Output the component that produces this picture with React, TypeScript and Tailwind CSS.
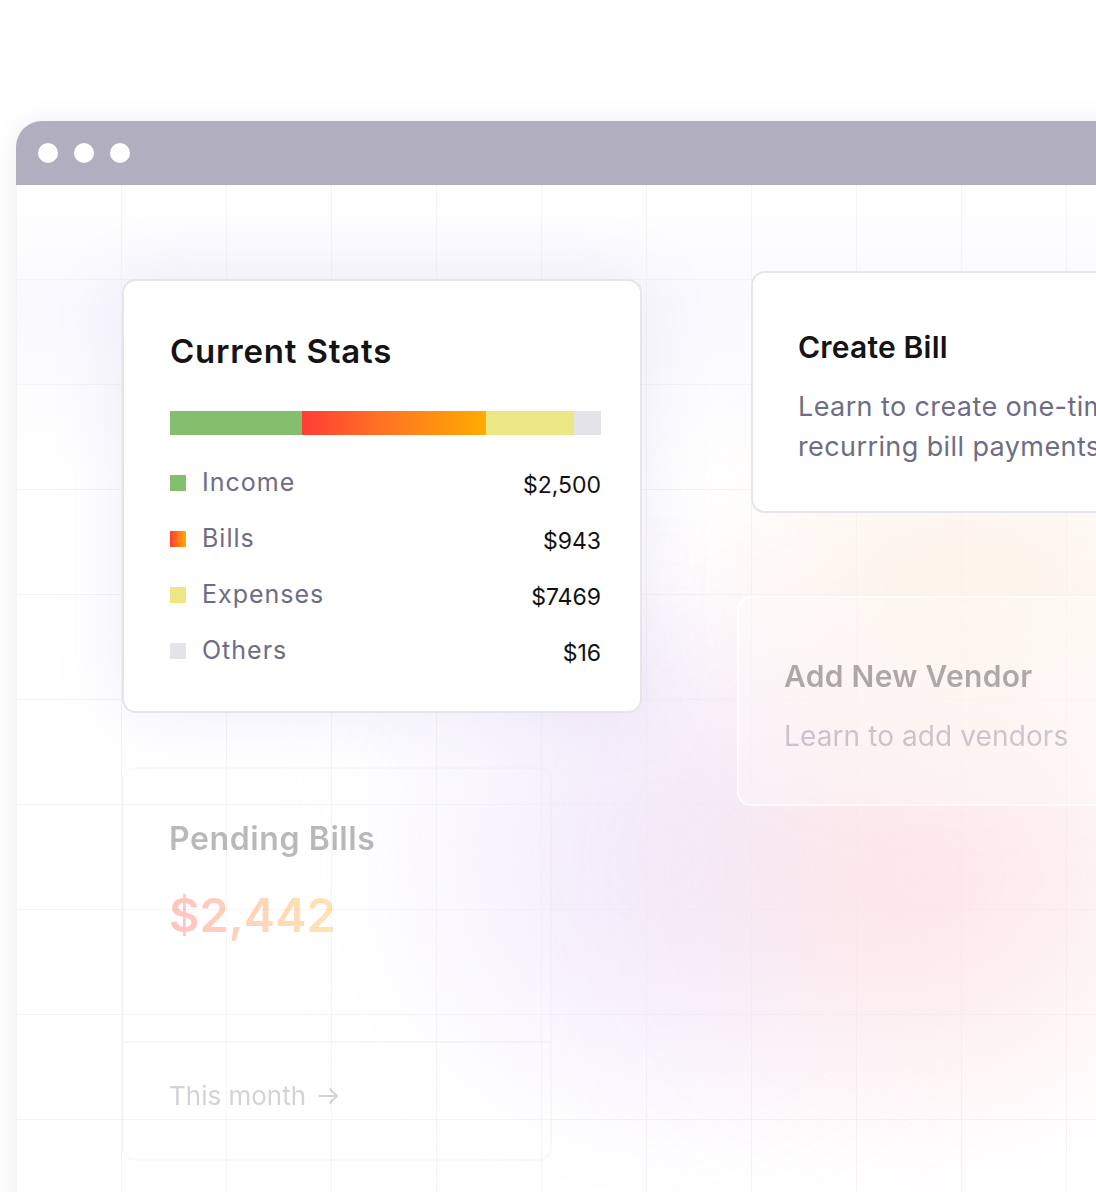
import React from 'react'

type Stat = {
    label: string
    value: string
    swatch: string
}

const stats: Stat[] = [
    { label: 'Income', value: '$2,500', swatch: 'bg-[#84bf6e]' },
    { label: 'Bills', value: '$943', swatch: 'bg-[linear-gradient(to_right,#ff3d35,#ffab00)]' },
    { label: 'Expenses', value: '$7469', swatch: 'bg-[#ebe784]' },
    { label: 'Others', value: '$16', swatch: 'bg-[#e4e4e8]' },
]

function CurrentStats() {
    return (
        <div className="w-[520px] h-[434px] bg-white border-2 border-[#e6e5ea] rounded-[14px] shadow-[0_0_70px_rgba(150,130,210,0.14)] pl-[46px] pr-[39px] pt-[48px]">
            <h2 className="text-[33px] leading-[44px] font-semibold text-[#141414] tracking-[0.8px]">Current Stats</h2>
            <div className="flex h-[24px] mt-[38px]">
                <div className="w-[132px] bg-[#84bf6e]" />
                <div className="w-[184px] bg-[linear-gradient(to_right,#ff3d35,#ff7a20,#ffab00)]" />
                <div className="w-[88px] bg-[#ebe784]" />
                <div className="flex-1 bg-[#e4e4e8]" />
            </div>
            <div className="flex flex-col mt-[32px] gap-[24px]">
                {stats.map(s => (
                    <div key={s.label} className="flex items-center justify-between h-[32px]">
                        <div className="flex items-center gap-[16px]">
                            <span className={`w-[16px] h-[16px] ${s.swatch}`} />
                            <span className="text-[25px] text-[#6e6d85] tracking-[1px]">{s.label}</span>
                        </div>
                        <span className="text-[23px] text-[#111111] mt-[4px]">{s.value}</span>
                    </div>
                ))}
            </div>
        </div>
    )
}

function PendingBills() {
    return (
        <div className="w-[430px] h-[394px] border-2 border-[#ececef] rounded-[14px] bg-white/40 opacity-30 flex flex-col">
            <div className="flex-1 pl-[45px] pt-[50px]">
                <h3 className="text-[32px] leading-[40px] font-semibold text-[#1a1a1a] tracking-[0.6px]">Pending Bills</h3>
                <div className="mt-[28px] text-[47px] leading-[56px] font-semibold bg-[linear-gradient(to_right,#ff3d35,#ffab00)] bg-clip-text text-transparent inline-block">$2,442</div>
            </div>
            <div className="h-[118px] border-t-2 border-[#e6e5ea] pl-[45px] pt-[33px]">
                <span className="text-[26px] text-[#6e6d85] flex items-center gap-[10px]">
                    This month
                    <svg width="24" height="24" viewBox="0 0 24 24" fill="none" stroke="currentColor" strokeWidth="1.8" strokeLinecap="round" strokeLinejoin="round">
                        <path d="M3 12h18M14 5l7 7-7 7" />
                    </svg>
                </span>
            </div>
        </div>
    )
}

export default function App() {
    return (
        <div className="w-[1096px] h-[1192px] overflow-hidden bg-white font-['Inter','Noto_Sans',sans-serif] pt-[121px] pl-[16px]">
            <div className="w-[1200px] h-[1200px] rounded-tl-[26px] overflow-hidden bg-white shadow-[0_0_24px_rgba(120,110,150,0.12)]">
                {/* title bar */}
                <div className="h-[64px] bg-[#b1aec0] flex items-center gap-[16px] pl-[22px]">
                    <span className="w-[20px] h-[20px] rounded-full bg-white" />
                    <span className="w-[20px] h-[20px] rounded-full bg-white" />
                    <span className="w-[20px] h-[20px] rounded-full bg-white" />
                </div>

                {/* canvas */}
                <div className="relative h-[1136px] bg-[linear-gradient(to_right,#f4f3f7_1px,transparent_1px),linear-gradient(to_bottom,#f4f3f7_1px,transparent_1px),linear-gradient(to_bottom,#ffffff,#faf9fd_120px,#ffffff_300px)] bg-[size:105px_105px,105px_105px,100%_100%] bg-[position:0_94px,0_94px,0_0]">
                    {/* soft colour glows */}
                    <div className="absolute left-[440px] top-[460px] w-[420px] h-[420px] rounded-full bg-[#efe6fb] opacity-80 blur-[90px]" />
                    <div className="absolute left-[700px] top-[500px] w-[420px] h-[380px] rounded-full bg-[#fde3e6] opacity-80 blur-[90px]" />
                    <div className="absolute left-[760px] top-[280px] w-[380px] h-[260px] rounded-full bg-[#fff0e4] opacity-80 blur-[80px]" />

                    <div className="relative flex pl-[106px]">
                        <div className="flex flex-col gap-[54px] pt-[94px]">
                            <CurrentStats />
                            <PendingBills />
                        </div>

                        <div className="flex flex-col ml-[109px] pt-[86px]">
                            <div className="w-[420px] h-[242px] bg-white border-2 border-[#e6e5ea] rounded-[14px] pl-[45px] pt-[54px]">
                                <h3 className="text-[30px] leading-[40px] font-semibold text-[#141414] tracking-[0.2px]">Create Bill</h3>
                                <p className="mt-[20px] text-[27px] leading-[40px] text-[#6e6d85] tracking-[0.4px] whitespace-nowrap">
                                    Learn to create one-time or<br />recurring bill payments
                                </p>
                            </div>
                            <div className="-ml-[14px] mt-[83px] w-[420px] h-[210px] rounded-[14px] border-2 border-white/70 bg-white/30 pl-[45px] pt-[58px]">
                                <div className="opacity-35">
                                    <h3 className="text-[30px] leading-[40px] font-semibold text-[#1a1a1a] tracking-[0.3px]">Add New Vendor</h3>
                                    <p className="mt-[20px] text-[28px] leading-[40px] text-[#6e6d85] tracking-[0.1px] whitespace-nowrap">Learn to add vendors</p>
                                </div>
                            </div>
                        </div>
                    </div>
                </div>
            </div>
        </div>
    )
}
